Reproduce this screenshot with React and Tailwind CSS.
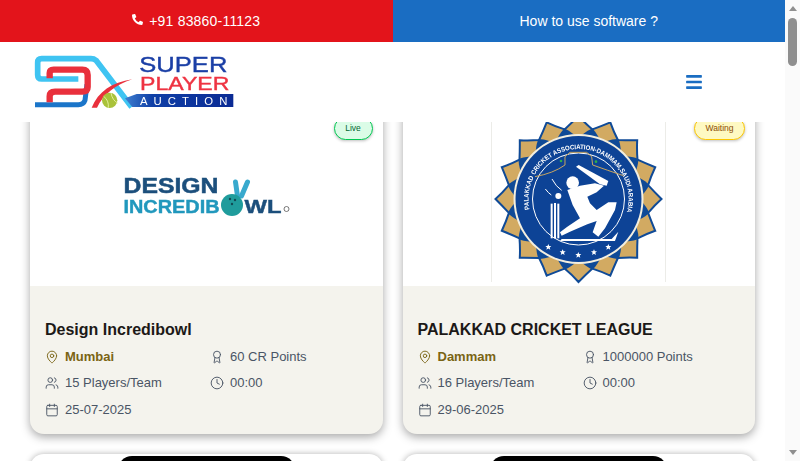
import React from 'react';
import { Award, Calendar, Clock, MapPin, Users } from 'lucide-react';
import { FaBars, FaPhoneAlt } from 'react-icons/fa';

const tournaments = [
    {
        name: 'Design Incredibowl',
        city: 'Mumbai',
        points: '60 CR Points',
        players: '15 Players/Team',
        time: '00:00',
        date: '25-07-2025',
        status: 'Live',
        badge: 'bg-green-100 border-green-500 text-green-800 right-[10px] w-[39px]',
        logo: <IncredibowlLogo />
    },
    {
        name: 'PALAKKAD CRICKET LEAGUE',
        city: 'Dammam',
        points: '1000000 Points',
        players: '16 Players/Team',
        time: '00:00',
        date: '29-06-2025',
        status: 'Waiting',
        badge: 'bg-yellow-100 border-yellow-400 text-yellow-800 right-[10px] w-[51px]',
        logo: <PalakkadLogo />
    }
];

function SuperPlayerLogo() {
    return (
        <svg width="220" height="70" viewBox="0 0 660 210" className="-mt-[4px] blur-[0.3px]">
            <defs>
                <linearGradient id="band" x1="0" x2="1" y1="0" y2="0">
                    <stop offset="0" stopColor="#3f7fd0" />
                    <stop offset="0.25" stopColor="#0f3fa6" />
                    <stop offset="1" stopColor="#0a2a94" />
                </linearGradient>
            </defs>
            <path d="M320 186 L213 46 Q207 41 198 41 L50 41 Q38 41 38 53 L38 90 Q38 102 50 102 L160 102" fill="none" stroke="#3fc4f2" strokeWidth="17" />
            <path d="M30 179 L160 179 Q176 179 180 166 L186 118" fill="none" stroke="#1b75c9" strokeWidth="15" />
            <path d="M74 100 L74 84 Q74 74 86 74 L172 74 Q188 74 188 90 L188 126 Q188 140 172 140 L90 140 Q74 140 74 154 L74 172" fill="none" stroke="#e9303c" strokeWidth="19" />
            <path d="M322 103 C260 112 220 140 200 188 L216 188 C234 150 270 120 322 103 Z" fill="#e9303c" />
            <path d="M335 147 L625 147 L625 186 L322 186 L300 160 Z" fill="url(#band)" />
            <circle cx="254" cy="166" r="23" fill="#a9c23a" />
            <path d="M236 154 Q252 166 250 188 M258 144 Q262 166 278 174" fill="none" stroke="#e4ee9a" strokeWidth="3" />
            <text x="343" y="80" fontFamily="Liberation Sans" fontSize="66" fill="#1b3fa6" stroke="#1b3fa6" strokeWidth="1.2" textLength="264" lengthAdjust="spacingAndGlyphs">SUPER</text>
            <text x="345" y="135" fontFamily="Liberation Sans" fontSize="55" fill="#ee3342" stroke="#ee3342" strokeWidth="1.2" textLength="268" lengthAdjust="spacingAndGlyphs">PLAYER</text>
            <text x="345" y="180" fontFamily="Liberation Sans" fontSize="34" fill="#ffffff" textLength="262">AUCTION</text>
        </svg>
    );
}

function IncredibowlLogo() {
    return (
        <svg width="200" height="200" viewBox="0 0 200 200" className="blur-[0.3px]">
            <text x="17.5" y="107" fontFamily="Liberation Sans" fontWeight="700" fontSize="22.5" fill="#1c4f7c" stroke="#1c4f7c" strokeWidth="0.5" textLength="95" lengthAdjust="spacingAndGlyphs">DESIGN</text>
            <text x="17.5" y="127" fontFamily="Liberation Sans" fontWeight="700" fontSize="18" fill="#2198bd" stroke="#2198bd" strokeWidth="0.4" textLength="96" lengthAdjust="spacingAndGlyphs">INCREDIB</text>
            <path d="M129.5 96 L131.5 110" stroke="#38a9cd" strokeWidth="5" strokeLinecap="round" />
            <path d="M141.5 96 L135.5 110" stroke="#38a9cd" strokeWidth="5" strokeLinecap="round" />
            <circle cx="126" cy="119" r="11" fill="#1f9c9c" />
            <circle cx="124" cy="113" r="1.2" fill="#124a54" />
            <circle cx="129" cy="114" r="1.2" fill="#124a54" />
            <circle cx="126" cy="118" r="1.2" fill="#124a54" />
            <text x="138.5" y="127" fontFamily="Liberation Sans" fontWeight="700" fontSize="18" fill="#1c4f7c" stroke="#1c4f7c" strokeWidth="0.4" textLength="37" lengthAdjust="spacingAndGlyphs">WL</text>
            <circle cx="180.5" cy="123" r="2.5" fill="none" stroke="#555" strokeWidth="0.8" />
        </svg>
    );
}

function PalakkadLogo() {
    const cx = 87.5;
    const cy = 113;
    const point = (r, deg) => {
        const a = (deg * Math.PI) / 180;
        return `${(cx + r * Math.cos(a)).toFixed(1)} ${(cy + r * Math.sin(a)).toFixed(1)}`;
    };
    const angles = Array.from({ length: 16 }, (_, i) => i * 22.5 - 90);
    const outline = angles
        .map((deg) => `L${point(83, deg)} Q${point(76, deg + 5)} ${point(71, deg + 11.25)} Q${point(76, deg + 17)} ${point(83, deg + 22.5)}`)
        .join(' ')
        .replace('L', 'M');

    return (
        <svg width="175" height="200" viewBox="0 0 175 200" className="blur-[0.3px]">
            <path d="M0.5 36 V196 M174.5 36 V196" stroke="#ecece8" strokeWidth="1" />
            <path d={`${outline} Z`} fill="#d2aa62" stroke="#0f4a97" strokeWidth="2" />
            {angles.map((deg) => (
                <path
                    key={deg}
                    d={`M${point(64, deg + 3)} Q${point(70, deg + 8)} ${point(72, deg + 11.25)} Q${point(70, deg + 14)} ${point(64, deg + 19)} Z`}
                    fill="#0f4a97"
                />
            ))}
            <circle cx={cx} cy={cy} r="65" fill="#f3efe0" />
            <circle cx={cx} cy={cy} r="63" fill="#0d4396" />
            <circle cx={cx} cy={cy} r="46" fill="none" stroke="#ffffff" strokeWidth="1" />
            <defs>
                <path id="ring" d={`M${point(50, 168)} A50 50 0 1 1 ${point(50, 16)}`} />
            </defs>
            <text fontFamily="Liberation Sans" fontWeight="700" fontSize="6.6" fill="#ffffff">
                <textPath href="#ring" textLength="180" lengthAdjust="spacingAndGlyphs">PALAKKAD CRICKET ASSOCIATION-DAMMAM,SAUDI ARABIA</textPath>
            </text>
            <g transform="translate(-11 29) scale(0.3333)">
                <path d="M165 185 Q220 175 255 150 L255 125 L270 112 L320 112 L335 125 L338 150 Q380 165 430 182" fill="none" stroke="#c9a660" strokeWidth="3" />
                <circle cx="243" cy="138" r="4" fill="#2fae4a" />
                <circle cx="348" cy="140" r="4" fill="#2fae4a" />
                <path d="M288 155 L296 150 L385 198 L380 212 L360 208 Z" fill="#ffffff" />
                <circle cx="278" cy="203" r="19" fill="#ffffff" />
                <path d="M262 225 L300 212 L345 205 L372 212 L350 232 L322 245 L330 265 L350 285 L385 262 L410 262 L405 285 L375 340 L355 365 L338 352 L350 318 L322 328 L270 350 L245 362 L240 352 L262 335 L300 310 L278 270 Z" fill="#ffffff" />
                <path d="M245 372 L395 372 L415 350 L405 378 L240 378 Z" fill="#ffffff" />
                <rect x="212" y="266" width="6" height="104" fill="#ffffff" />
                <rect x="222" y="264" width="6" height="106" fill="#ffffff" />
                <rect x="232" y="266" width="6" height="104" fill="#ffffff" />
                <circle cx="235" cy="243" r="9" fill="#ffffff" />
                <path d="M196 222 Q206 235 214 240 M216 192 Q228 215 245 226" fill="none" stroke="#ffffff" strokeWidth="3" />
                {[[205, 396], [248, 412], [295, 420], [342, 412], [385, 396]].map(([x, y]) => (
                    <path key={x} transform={`translate(${x} ${y})`} d="M0 -9 L2.6 -3 L9 -3 L4 1.5 L5.8 8 L0 4.4 L-5.8 8 L-4 1.5 L-9 -3 L-2.6 -3 Z" fill="#ffffff" />
                ))}
            </g>
        </svg>
    );
}

const InfoItem = ({ icon: Icon, className = 'text-gray-600', children }) => (
    <div className={`flex items-center gap-[6px] h-5 ${className}`}>
        <Icon size={14} strokeWidth={1.6} className="shrink-0" />
        <span>{children}</span>
    </div>
);

const TournamentCard = ({ item }) => (
    <div className="relative rounded-[14px] overflow-hidden bg-[#f4f3ed] shadow-[0_3px_10px_rgba(0,0,0,0.35)]">
        <div className="h-[200px] bg-white flex justify-center">{item.logo}</div>
        <span className={`absolute top-[31px] h-[23px] rounded-full border flex items-center justify-center text-[8.5px] shadow-[0_1px_3px_rgba(0,0,0,0.25)] ${item.badge}`}>
            {item.status}
        </span>
        <div className="px-[15px] pt-[32px] pb-[14.2px]">
            <h3 className="text-base leading-6 font-semibold text-[#1c1917] mb-[5px]">{item.name}</h3>
            <div className="grid grid-cols-[165px_1fr] gap-y-[6.4px] text-[13px] leading-5">
                <InfoItem icon={MapPin} className="text-[#7a6414] font-bold">{item.city}</InfoItem>
                <InfoItem icon={Award}>{item.points}</InfoItem>
                <InfoItem icon={Users}>{item.players}</InfoItem>
                <InfoItem icon={Clock}>{item.time}</InfoItem>
                <InfoItem icon={Calendar}>{item.date}</InfoItem>
            </div>
        </div>
    </div>
);

const PeekCard = () => (
    <div className="h-[60px] rounded-[14px] bg-white shadow-[0_0_6px_rgba(0,0,0,0.3)] flex justify-center pt-[2px]">
        <div className="w-[177px] h-[40px] rounded-t-[14px] bg-black" />
    </div>
);

export default function App() {
    return (
        <div className="h-[461px] overflow-hidden flex bg-white font-['Liberation_Sans',sans-serif]">
            <div className="w-[785px] flex flex-col">
                <div className="grid grid-cols-2 h-[42px] shrink-0 text-sm text-white">
                    <div className="bg-[#e3141b] flex items-center justify-center gap-[6px]">
                        <FaPhoneAlt size={11} className="-mt-[3px]" />
                        <span className="tracking-[0.2px]">+91 83860-11123</span>
                    </div>
                    <div className="bg-[#1a6dc2] flex items-center justify-center">How to use software ?</div>
                </div>
                <header className="relative z-10 h-[80px] shrink-0 bg-white flex items-center justify-between pl-[25px] pr-[82px]">
                    <SuperPlayerLogo />
                    <FaBars size={18} className="text-[#1a6dc2]" />
                </header>
                <main className="flex-1 min-h-0 overflow-hidden px-[30px]">
                    <div className="grid grid-cols-2 gap-x-5 gap-y-5 -mt-[36px]">
                        {tournaments.map((item) => (
                            <TournamentCard key={item.name} item={item} />
                        ))}
                        <PeekCard />
                        <PeekCard />
                    </div>
                </main>
            </div>
            <div className="w-[15px] shrink-0 bg-[#fafafa] flex flex-col items-center justify-between py-[6px]">
                <div className="flex flex-col items-center w-full">
                    <div className="w-0 h-0 border-x-[4.5px] border-x-transparent border-b-[5px] border-b-[#8f8f8f]" />
                    <div className="w-[9px] h-[48px] mt-[7px] rounded-full bg-[#8f8f8f]" />
                </div>
                <div className="w-0 h-0 border-x-[4.5px] border-x-transparent border-t-[5px] border-t-[#8f8f8f]" />
            </div>
        </div>
    );
}
